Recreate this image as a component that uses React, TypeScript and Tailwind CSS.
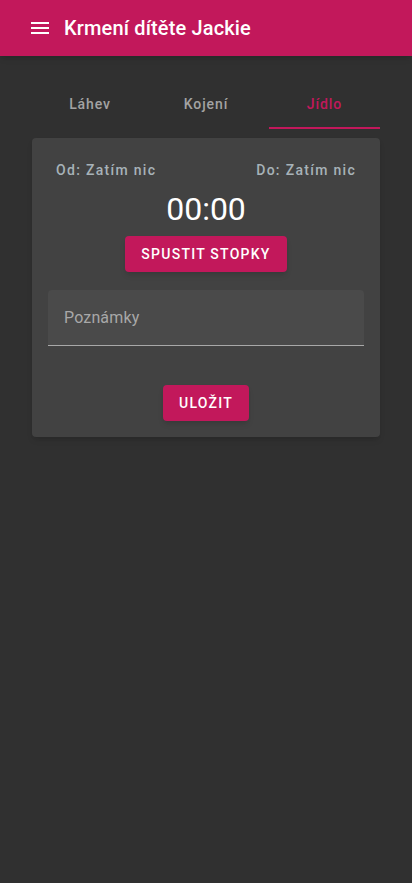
import React from "react";

const tabs = ["Láhev", "Kojení", "Jídlo"];

const MenuIcon: React.FC = () => (
    <svg width="24" height="24" viewBox="0 0 24 24" fill="white">
        <path d="M3 18h18v-2H3v2zm0-5h18v-2H3v2zm0-7v2h18V6H3z" />
    </svg>
);

const App: React.FC = () => (
    <div className="min-h-[883px] bg-[#303030] font-['Roboto',sans-serif]">
        <header className="h-14 bg-[#c2185b] flex items-center pl-7 gap-3 shadow-md">
            <MenuIcon />
            <h1 className="text-white text-[20px] font-medium tracking-[0.15px]">Krmení dítěte Jackie</h1>
        </header>

        <div className="px-8 pt-[25px]">
            <div className="grid grid-cols-3">
                {tabs.map((t, idx) => (
                    <div key={t} className="h-12 flex flex-col">
                        <div
                            className={
                                "flex-1 flex items-center justify-center text-sm font-medium tracking-[0.9px] " +
                                (idx === 2 ? "text-[#c2185b] pl-[5px]" : "text-[#a3a3a3]")
                            }
                        >
                            {t}
                        </div>
                        <div className={idx === 2 ? "h-[2px] bg-[#c2185b] ml-[5px]" : "h-[2px]"} />
                    </div>
                ))}
            </div>

            <div className="mt-[9px] bg-[#424242] rounded shadow-md px-4 pt-[22px] pb-4 flex flex-col items-center">
                <div className="w-full px-2 flex justify-between text-sm font-medium tracking-[1.3px] leading-5 text-[#a7b2b8]">
                    <span>Od: Zatím nic</span>
                    <span>Do: Zatím nic</span>
                </div>
                <div className="text-white text-[32px] leading-10 mt-[9px]">00:00</div>
                <button className="mt-[7px] h-9 px-4 rounded bg-[#c2185b] text-white text-sm font-medium tracking-[1.25px] shadow-md">
                    SPUSTIT STOPKY
                </button>
                <div className="mt-[18px] w-full h-14 bg-[#4a4a4a] rounded-t border-b border-[#a8a8a8] flex items-center px-4">
                    <span className="text-base text-[#a8a8a8] tracking-[0.15px]">Poznámky</span>
                </div>
                <button className="mt-[39px] h-9 px-4 rounded bg-[#c2185b] text-white text-sm font-medium tracking-[1.25px] shadow-md">
                    ULOŽIT
                </button>
            </div>
        </div>
    </div>
);

export default App;
